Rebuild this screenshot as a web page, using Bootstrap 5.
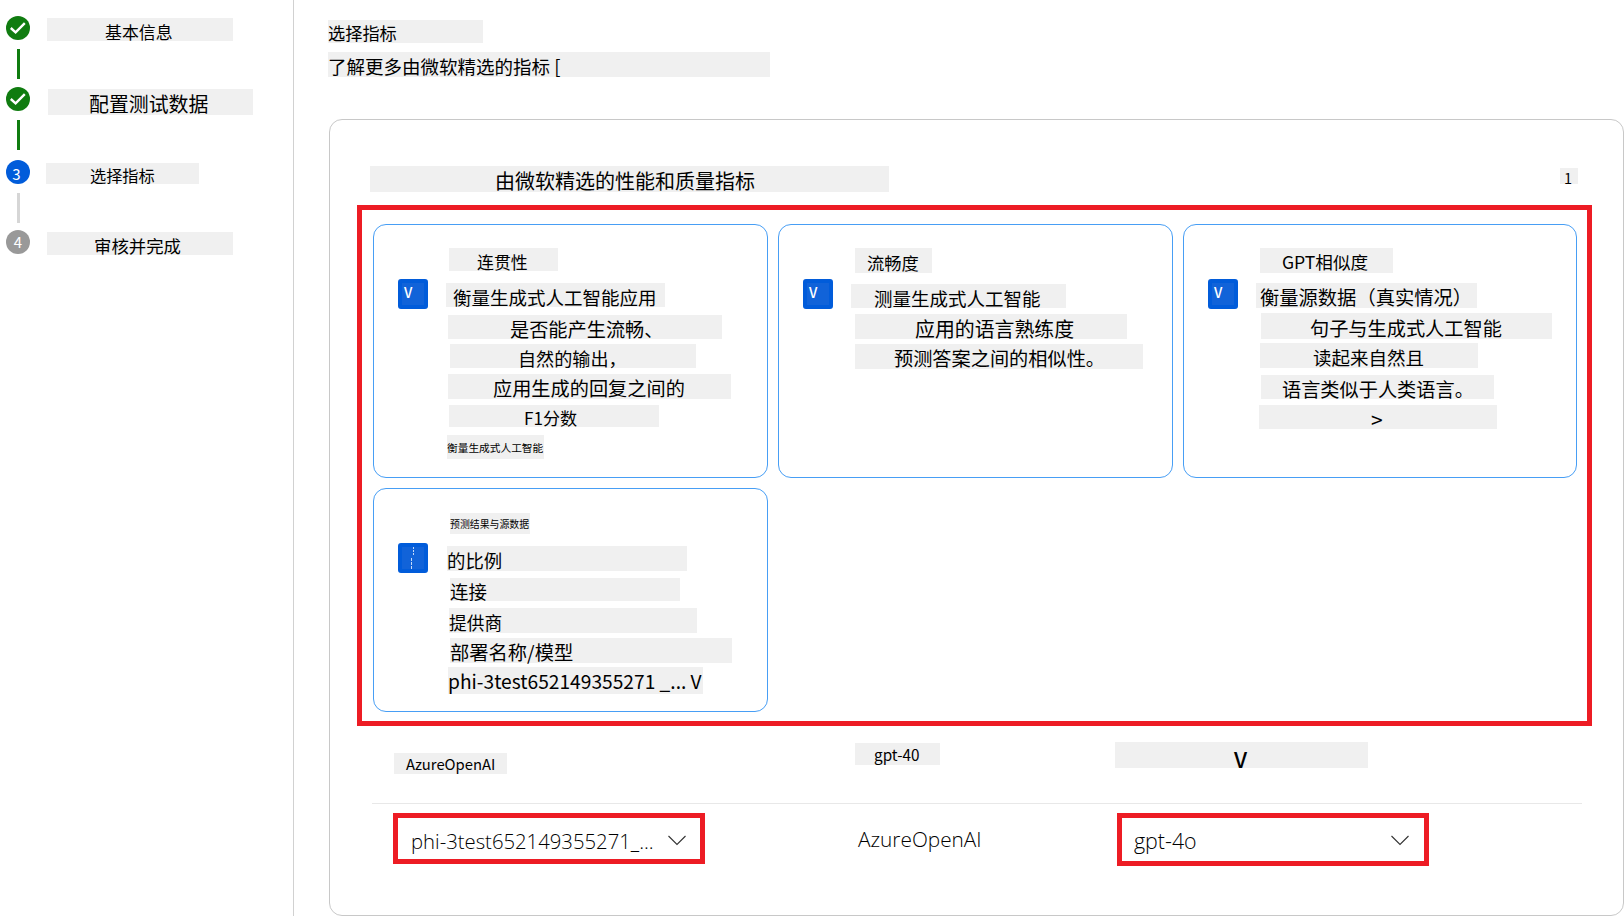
<!DOCTYPE html>
<html lang="zh-CN">
<head>
<meta charset="utf-8">
<meta name="viewport" content="width=device-width, initial-scale=1">
<title>选择指标</title>
<link href="https://cdn.jsdelivr.net/npm/bootstrap@5.3.0/dist/css/bootstrap.min.css" rel="stylesheet">
<style>
  body { height: 916px; font-family: "Noto Sans CJK SC", "Noto Sans", sans-serif; color: #000; background: #fff; }
  .steps-pane { width: 294px; border-right: 1px solid #d1d1d1; padding: 16px 0 0 6px; }
  .step-row { height: var(--s); }
  .dot { width: 24px; height: 24px; border-radius: 50%; color: #fff; font: 15px/24px "Noto Sans CJK SC", sans-serif; }
  .dot.done, .rail.done { background: #107c10; }
  .dot.now { background: #015cda; line-height: 28px; padding-right: 3px; }
  .dot.todo { background: #999; }
  .dot svg { display: block; }
  .rail { width: 3px; height: 30px; margin: 9px 0 0 11px; background: #d6d6d6; }
  .s1 { --s: 71px; } .s2 { --s: 73px; } .s3 { --s: 70px; } .s4 { --s: 26px; }

  /* grey text strips: t = top gap, x = left gap, w/h = size, p = text inset, f = font size, d = extra line height */
  .strip { flex: none; margin: var(--t) 0 0 var(--x); width: var(--w); height: var(--h); padding-left: var(--p);
    font-size: var(--f); line-height: calc(var(--h) + var(--d, 4px)); background: #f0f0f0; white-space: nowrap; letter-spacing: var(--k, 0); }
  .n1 { --t: 2px; --x: 17px; --w: 186px; --h: 23px; --p: 58px; --f: 16.9px; }
  .n2 { --t: 2px; --x: 18px; --w: 205px; --h: 26px; --p: 41px; --f: 19.9px; }
  .n3 { --t: 3px; --x: 16px; --w: 153px; --h: 21px; --p: 44px; --f: 16.2px; }
  .n4 { --t: 2px; --x: 17px; --w: 186px; --h: 23px; --p: 47px; --f: 17.4px; }

  .work-pane { padding: 20px 0 0 34px; }
  .h1s { --t: 0px; --x: 0px; --w: 155px; --h: 23px; --p: 0px; --f: 17.2px; --d: 2px; }
  .h2s { --t: 9px; --x: 0px; --w: 442px; --h: 25px; --p: 0px; --f: 18.5px; }
  .panel { margin: 42px 0 0 1px; width: 1295px; height: 797px; border: 1px solid #c8c8c8; border-radius: 13px; }
  .p1 { --t: 46px; --x: 40px; --w: 519px; --h: 26px; --p: 125px; --f: 20px; }
  .p2 { --t: 48px; --x: 671px; --w: 18px; --h: 16px; --p: 4px; --f: 14.5px; }

  .picked { width: 1235px; height: 521px; margin: 13px 0 0 27px; padding: 14px 11px; border: 5px solid #ed1c24;
    display: grid; grid-template: 254px 224px / 395px 395px 394px; gap: 10px; }
  .metric { border: 1px solid #479ef5; border-radius: 13px; }
  .tick { flex: none; width: 30px; height: 30px; margin: 54px 0 0 24px; border: 4px solid #015cda; border-radius: 3px;
    background: #1163d9; color: #fff; font-size: 14px; font-weight: 500; line-height: 18px; padding-left: 2px; }

  .a1 { --t: 23px; --x: 21px; --w: 109px; --h: 23px; --p: 28px; --f: 16.9px; }
  .a2 { --t: 12px; --x: 18px; --w: 219px; --h: 24px; --p: 7px; --f: 18.5px; }
  .a3 { --t: 8px; --x: 20px; --w: 274px; --h: 24px; --p: 62px; --f: 19.2px; }
  .a4 { --t: 5px; --x: 22px; --w: 246px; --h: 24px; --p: 68px; --f: 18.1px; }
  .a5 { --t: 6px; --x: 20px; --w: 283px; --h: 25px; --p: 45px; --f: 19.2px; }
  .a6 { --t: 6px; --x: 21px; --w: 210px; --h: 22px; --p: 75px; --f: 17.1px; }
  .a7 { --t: 8px; --x: 19px; --w: 97px; --h: 24px; --p: 0px; --f: 10.7px; --d: 2px; }

  .b1 { --t: 23px; --x: 22px; --w: 77px; --h: 25px; --p: 12px; --f: 17.3px; }
  .b2 { --t: 11px; --x: 18px; --w: 215px; --h: 24px; --p: 23px; --f: 18.5px; }
  .b3 { --t: 6px; --x: 22px; --w: 272px; --h: 25px; --p: 60px; --f: 19.9px; }
  .b4 { --t: 5px; --x: 22px; --w: 288px; --h: 25px; --p: 39px; --f: 19.2px; }

  .c1 { --t: 23px; --x: 22px; --w: 133px; --h: 25px; --p: 22px; --f: 17.6px; --d: 3px; }
  .c2 { --t: 10px; --x: 18px; --w: 221px; --h: 25px; --p: 4px; --f: 19.3px; }
  .c3 { --t: 5px; --x: 23px; --w: 291px; --h: 26px; --p: 49px; --f: 19.2px; }
  .c4 { --t: 4px; --x: 22px; --w: 218px; --h: 25px; --p: 53px; --f: 18.5px; }
  .c5 { --t: 7px; --x: 23px; --w: 233px; --h: 24px; --p: 21px; --f: 19.2px; }
  .c6 { --t: 6px; --x: 21px; --w: 238px; --h: 24px; --p: 112px; --f: 21px; --d: 5px; }

  .d1 { --t: 24px; --x: 22px; --w: 80px; --h: 21px; --p: 0px; --f: 9.9px; --d: 2px; }
  .d2 { --t: 12px; --x: 19px; --w: 240px; --h: 25px; --p: 0px; --f: 18.4px; }
  .d3 { --t: 7px; --x: 22px; --w: 230px; --h: 23px; --p: 0px; --f: 18.4px; }
  .d4 { --t: 7px; --x: 21px; --w: 248px; --h: 25px; --p: 0px; --f: 17.7px; --d: 3px; }
  .d5 { --t: 5px; --x: 22px; --w: 282px; --h: 25px; --p: 0px; --f: 19.3px; }
  .d6 { --t: 4px; --x: 20px; --w: 255px; --h: 27px; --p: 0px; --f: 19.2px; --d: 1px; }

  .models-head, .models-row { width: 1210px; margin-left: 42px; }
  .models-head { height: 78px; border-bottom: 1px solid #e8e8e8; }
  .e1 { --t: 27px; --x: 22px; --w: 113px; --h: 21px; --p: 12px; --f: 14.8px; --d: 1px; }
  .e2 { --t: 17px; --x: 348px; --w: 85px; --h: 22px; --p: 19px; --f: 15.3px; --d: 1px; }
  .e3 { --t: 16px; --x: 175px; --w: 253px; --h: 26px; --p: 119px; --f: 22px; --d: 6px; font-weight: 500; }
  .models-row { padding-top: 9px; font-family: "Open Sans", "Noto Sans", sans-serif; font-weight: 300; font-size: 20.5px; color: #000; }
  .picker { width: 312px; border: 5px solid #ed1c24; padding: 0 14px 0 13px; white-space: nowrap; }
  .picker.one { height: 51px; margin-left: 21px; line-height: 46px; font-size: 20.3px; }
  .picker.two { height: 53px; margin-left: 137px; line-height: 46px; padding-left: 12px; padding-right: 15px; font-size: 21.4px; }
  .provider { width: 122px; margin-left: 153px; line-height: 52px; white-space: nowrap; font-size: 20.8px; }
  .chev { margin-top: 17px; }
</style>
</head>
<body class="d-flex overflow-hidden">
  <aside class="steps-pane flex-shrink-0">
    <ol class="list-unstyled m-0">
      <li class="step-row s1 d-flex">
        <div><div class="dot done"><svg width="24" height="24" viewBox="0 0 24 24" fill="none" stroke="#fff" stroke-width="2.4"><path d="M4.8 12 9.6 16.4 18.8 7.2"/></svg></div><div class="rail done"></div></div>
        <div class="strip n1">基本信息</div>
      </li>
      <li class="step-row s2 d-flex">
        <div><div class="dot done"><svg width="24" height="24" viewBox="0 0 24 24" fill="none" stroke="#fff" stroke-width="2.4"><path d="M4.8 12 9.6 16.4 18.8 7.2"/></svg></div><div class="rail done"></div></div>
        <div class="strip n2">配置测试数据</div>
      </li>
      <li class="step-row s3 d-flex">
        <div><div class="dot now text-center">3</div><div class="rail"></div></div>
        <div class="strip n3">选择指标</div>
      </li>
      <li class="step-row s4 d-flex">
        <div class="dot todo text-center">4</div>
        <div class="strip n4">审核并完成</div>
      </li>
    </ol>
  </aside>

  <main class="work-pane flex-shrink-0">
    <div class="strip h1s">选择指标</div>
    <div class="strip h2s">了解更多由微软精选的指标 [</div>

    <section class="panel">
      <div class="d-flex align-items-start">
        <div class="strip p1">由微软精选的性能和质量指标</div>
        <div class="strip p2">1</div>
      </div>

      <div class="picked">
        <article class="metric d-flex align-items-start">
          <div class="tick">V</div>
          <div>
            <div class="strip a1">连贯性</div>
            <div class="strip a2">衡量生成式人工智能应用</div>
            <div class="strip a3">是否能产生流畅、</div>
            <div class="strip a4">自然的输出，</div>
            <div class="strip a5">应用生成的回复之间的</div>
            <div class="strip a6">F1分数</div>
            <div class="strip a7">衡量生成式人工智能</div>
          </div>
        </article>
        <article class="metric d-flex align-items-start">
          <div class="tick">V</div>
          <div>
            <div class="strip b1">流畅度</div>
            <div class="strip b2">测量生成式人工智能</div>
            <div class="strip b3">应用的语言熟练度</div>
            <div class="strip b4">预测答案之间的相似性。</div>
          </div>
        </article>
        <article class="metric d-flex align-items-start">
          <div class="tick">V</div>
          <div>
            <div class="strip c1">GPT相似度</div>
            <div class="strip c2">衡量源数据（真实情况）</div>
            <div class="strip c3">句子与生成式人工智能</div>
            <div class="strip c4">读起来自然且</div>
            <div class="strip c5">语言类似于人类语言。</div>
            <div class="strip c6">&gt;</div>
          </div>
        </article>
        <article class="metric d-flex align-items-start">
          <div class="tick"><svg class="d-block" width="20" height="22" viewBox="0 0 20 22" fill="none" stroke="#fff" stroke-opacity=".75" stroke-width="1"><path d="M9.5 0V9" stroke-dasharray="2 1"/><path d="M7.5 11V22" stroke-dasharray="3 1"/></svg></div>
          <div>
            <div class="strip d1">预测结果与源数据</div>
            <div class="strip d2">的比例</div>
            <div class="strip d3">连接</div>
            <div class="strip d4">提供商</div>
            <div class="strip d5">部署名称/模型</div>
            <div class="strip d6">phi-3test652149355271 _... V</div>
          </div>
        </article>
      </div>

      <div class="models-head d-flex align-items-start">
        <div class="strip e1">AzureOpenAI</div>
        <div class="strip e2">gpt-40</div>
        <div class="strip e3">V</div>
      </div>
      <div class="models-row d-flex align-items-start">
        <div class="picker one d-flex justify-content-between align-items-start">
          <span>phi-3test652149355271_...</span>
          <svg class="chev" width="18" height="11" viewBox="0 0 18 11" fill="none" stroke="#333" stroke-width="1.1"><path d="M.5 1 9 9.5 17.5 1"/></svg>
        </div>
        <div class="provider">AzureOpenAI</div>
        <div class="picker two d-flex justify-content-between align-items-start">
          <span>gpt-4o</span>
          <svg class="chev" width="18" height="11" viewBox="0 0 18 11" fill="none" stroke="#333" stroke-width="1.1"><path d="M.5 1 9 9.5 17.5 1"/></svg>
        </div>
      </div>
    </section>
  </main>
<script src="https://cdn.jsdelivr.net/npm/bootstrap@5.3.0/dist/js/bootstrap.bundle.min.js"></script>
</body>
</html>
